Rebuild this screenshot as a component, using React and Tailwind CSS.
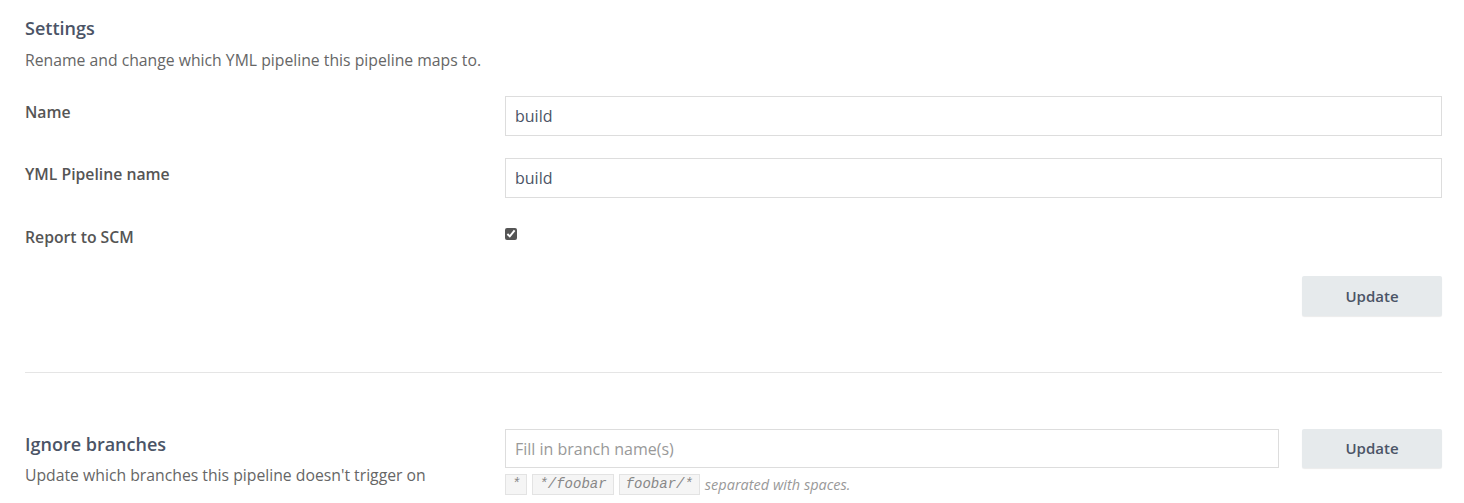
export default function App() {
  const font = { fontFamily: '"Open Sans", "Noto Sans", sans-serif' }
  const mono = { fontFamily: '"Liberation Mono", "Courier New", monospace' }
  return (
    <div className="min-h-screen bg-white pl-[25px] pr-[22px] text-[15px]" style={font}>
      <h2 className="pt-[16px] text-[18px] leading-[24px] font-semibold text-[#4b5466]">Settings</h2>
      <p className="mt-[9px] text-[15.75px] leading-[22px] text-[#666]">
        Rename and change which YML pipeline this pipeline maps to.
      </p>

      <div className="mt-[25px] flex items-start">
        <label className="w-[480px] pt-[5px] text-[15.75px] leading-[22px] font-semibold text-[#555]">Name</label>
        <input
          readOnly
          value="build"
          className="h-[40px] flex-1 border border-[#ddd] px-[9px] text-[16px] text-[#4b5466] outline-none"
        />
      </div>

      <div className="mt-[22px] flex items-start">
        <label className="w-[480px] pt-[5px] text-[15.75px] leading-[22px] font-semibold text-[#555]">YML Pipeline name</label>
        <input
          readOnly
          value="build"
          className="h-[40px] flex-1 border border-[#ddd] px-[9px] text-[16px] text-[#4b5466] outline-none"
        />
      </div>

      <div className="mt-[24px] flex items-start">
        <label className="w-[480px] pt-[4px] text-[15.75px] leading-[22px] font-semibold text-[#555]">Report to SCM</label>
        <input type="checkbox" readOnly checked className="mt-[6px] h-[12px] w-[12px] accent-[#555]" />
      </div>

      <div className="mt-[28px] flex justify-end">
        <button className="h-[40px] w-[140px] rounded-[2px] bg-[#e6eaec] text-[15px] font-semibold text-[#4b5466] shadow-[0_1px_1px_rgba(0,0,0,0.08)]">
          Update
        </button>
      </div>

      <hr className="mt-[56px] border-t border-[#e5e5e5]" />

      <div className="mt-[56px] flex items-start">
        <div className="w-[480px] pt-[3px]">
          <h3 className="text-[18px] leading-[24px] font-semibold text-[#4b5466]">Ignore branches</h3>
          <p className="mt-[8px] text-[15.75px] leading-[22px] text-[#666]">
            Update which branches this pipeline doesn't trigger on
          </p>
        </div>
        <div className="flex-1">
          <input
            placeholder="Fill in branch name(s)"
            className="h-[39px] w-full border border-[#ddd] px-[9px] text-[16px] text-[#4b5466] placeholder:text-[#999] outline-none"
          />
          <div className="mt-[6px] flex items-center gap-[5px] text-[14.5px] text-[#999]">
            <code className="border border-[#e3e3e3] bg-[#f5f5f5] px-[6px] text-[14px] leading-[19px] font-normal italic text-[#888]" style={mono}>*</code>
            <code className="border border-[#e3e3e3] bg-[#f5f5f5] px-[6px] text-[14px] leading-[19px] font-normal italic text-[#888]" style={mono}>*/foobar</code>
            <code className="border border-[#e3e3e3] bg-[#f5f5f5] px-[6px] text-[14px] leading-[19px] font-normal italic text-[#888]" style={mono}>foobar/*</code>
            <span className="italic">separated with spaces.</span>
          </div>
        </div>
        <button className="ml-[23px] h-[39px] w-[140px] rounded-[2px] bg-[#e6eaec] text-[15px] font-semibold text-[#4b5466] shadow-[0_1px_1px_rgba(0,0,0,0.08)]">
          Update
        </button>
      </div>
    </div>
  )
}
